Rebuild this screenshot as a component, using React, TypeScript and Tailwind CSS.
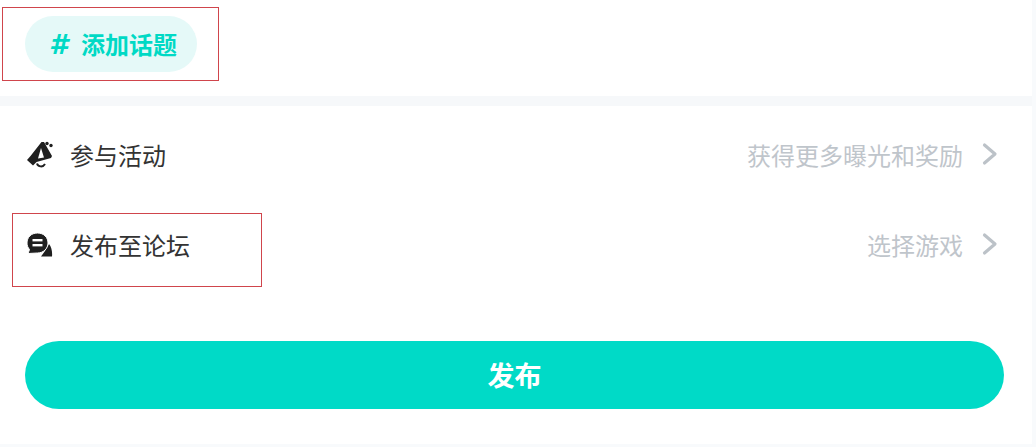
const CJK = 'font-["Noto_Sans_CJK_SC","Noto_Sans",sans-serif]'

function Chevron() {
  return (
    <svg width="16" height="24" viewBox="0 0 16 24" fill="none" className="mb-[2px] ml-[19px]">
      <path d="M2.5 3 L13 12 L2.5 21" stroke="#bcc2c8" strokeWidth="3.2" strokeLinecap="round" strokeLinejoin="round" />
    </svg>
  )
}

function Megaphone() {
  return (
    <svg width="28" height="28" viewBox="0 0 28 28" className="shrink-0">
      <path d="M16.5 1 L19 1 L27 15 L26 17 L11.5 21 L8 24.5 L2 19 L5.5 15 Z" fill="#1f1f1f" />
      <path d="M16 7 L19 16.5 L13 17.5 Z" fill="#fff" />
      <path d="M12 22.5 C13 26, 18 26.5, 20 23" stroke="#1f1f1f" strokeWidth="2" fill="none" />
      <circle cx="22" cy="2.5" r="1.7" fill="#1f1f1f" />
      <circle cx="26" cy="4.5" r="1.7" fill="#1f1f1f" />
    </svg>
  )
}

function ChatBubbles() {
  return (
    <svg width="28" height="28" viewBox="0 0 28 28" className="shrink-0">
      <path d="M24 13 C26.5 16, 27.5 21, 27 25.5 L16 25.5 L20 20 Z" fill="#1f1f1f" />
      <path d="M12.5 2 C19 2, 23 6.5, 23 12 C23 17.5, 18.5 22, 12.5 22 L3 22.5 L4.5 18.5 C2.8 16.5, 2 14.5, 2 12 C2 6.5, 6 2, 12.5 2 Z" fill="#1f1f1f" stroke="#fff" strokeWidth="1" />
      <rect x="7.5" y="8" width="10" height="2.4" fill="#fff" />
      <rect x="7.5" y="13" width="10" height="2.4" fill="#fff" />
    </svg>
  )
}

function Row({ icon, label, hint, className }: { icon: React.ReactNode; label: string; hint: string; className: string }) {
  return (
    <div className={`flex items-center pb-[2px] pl-[25px] pr-[38px] ${className}`}>
      {icon}
      <span className="ml-[17px] text-[24px] leading-none text-[#333333]">{label}</span>
      <span className="ml-auto text-[24px] leading-none text-[#bfc5cb]">{hint}</span>
      <Chevron />
    </div>
  )
}

export default function App() {
  return (
    <div className={`relative h-[447px] w-[1036px] overflow-hidden bg-white ${CJK}`}>
      {/* Topic */}
      <div className="h-[96px] pl-[25px] pt-[16px]">
        <div className="flex h-[56px] w-[172px] items-center rounded-full bg-[#e5f9f8] pl-[24px] text-[24px] font-bold leading-none text-[#00d9c5]">
          <span className='w-[32px] font-["DejaVu_Sans"] text-[27px] font-bold italic'>#</span>
          <span>添加话题</span>
        </div>
      </div>
      <div className="h-[10px] bg-[#f6f8fa]" />

      {/* Rows */}
      <Row icon={<Megaphone />} label="参与活动" hint="获得更多曝光和奖励" className="h-[100px]" />
      <Row icon={<ChatBubbles />} label="发布至论坛" hint="选择游戏" className="h-[80px]" />

      {/* Publish */}
      <div className="pl-[25px] pr-[32px] pt-[55px]">
        <button className="flex h-[68px] w-full items-center justify-center rounded-[34px] bg-[#00dac7] pb-[2px] text-[27px] font-bold leading-none text-white">
          发布
        </button>
      </div>

      {/* Edges */}
      <div className="absolute right-0 top-0 h-full w-[4px] bg-[#f8fafc]" />
      <div className="absolute bottom-0 left-0 h-[3px] w-full bg-[#f8fafc]" />

      {/* Annotation boxes */}
      <div className="absolute left-[2px] top-[7px] h-[74px] w-[217px] border border-[#d0454c]" />
      <div className="absolute left-[12px] top-[213px] h-[74px] w-[250px] border border-[#d0454c]" />
    </div>
  )
}
